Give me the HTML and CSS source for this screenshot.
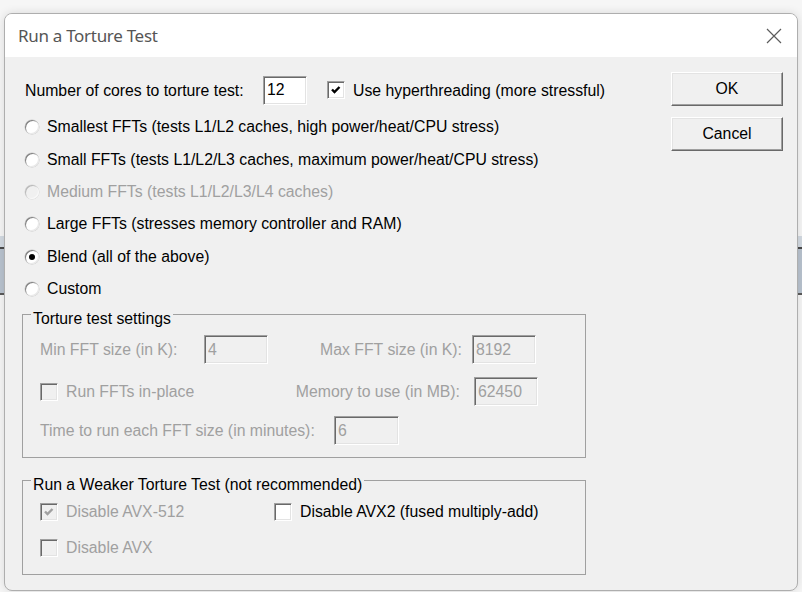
FILE: index.html
```html
<!DOCTYPE html>
<html lang="en">
<head>
  <meta charset="UTF-8">
  <title>Run a Torture Test</title>
  <link rel="stylesheet" href="styles.css">
</head>
<body>
  <div class="window">
    <div class="titlebar">
      <span class="title">Run a Torture Test</span>
      <svg class="close" width="16" height="16" viewBox="0 0 16 16">
        <path d="M1 1L15 15M15 1L1 15" stroke="#5c5c5c" stroke-width="1.2" fill="none"/>
      </svg>
    </div>

    <div class="client">
      <div class="main">
        <div class="row cores">
          <span class="cores-label">Number of cores to torture test:</span>
          <input class="field cores-field" type="text" value="12">
          <span class="check on">
            <svg width="16" height="16" viewBox="0 0 16 16"><path d="M4 7.5L6.5 10L11.5 5" stroke="#000" stroke-width="2.4" fill="none"/></svg>
          </span>
          <span class="check-text">Use hyperthreading (more stressful)</span>
        </div>

        <div class="choice"><span class="radio"></span>Smallest FFTs (tests L1/L2 caches, high power/heat/CPU stress)</div>
        <div class="choice"><span class="radio"></span>Small FFTs (tests L1/L2/L3 caches, maximum power/heat/CPU stress)</div>
        <div class="choice disabled"><span class="radio"></span>Medium FFTs (tests L1/L2/L3/L4 caches)</div>
        <div class="choice"><span class="radio"></span>Large FFTs (stresses memory controller and RAM)</div>
        <div class="choice"><span class="radio selected"></span>Blend (all of the above)</div>
        <div class="choice"><span class="radio"></span>Custom</div>

        <fieldset class="group settings">
          <legend>Torture test settings</legend>
          <div class="group-body disabled">
            <div class="row row-fft">
              <span class="min-label">Min FFT size (in K):</span>
              <input class="field size-field" type="text" value="4" disabled>
              <span class="max-label">Max FFT size (in K):</span>
              <input class="field size-field" type="text" value="8192" disabled>
            </div>
            <div class="row row-mem">
              <span class="inplace">
                <span class="check"></span>
                <span class="check-text">Run FFTs in-place</span>
              </span>
              <span class="mem-label">Memory to use (in MB):</span>
              <input class="field size-field" type="text" value="62450" disabled>
            </div>
            <div class="row row-time">
              <span class="time-label">Time to run each FFT size (in minutes):</span>
              <input class="field time-field" type="text" value="6" disabled>
            </div>
          </div>
        </fieldset>

        <fieldset class="group weaker">
          <legend>Run a Weaker Torture Test (not recommended)</legend>
          <div class="group-body">
            <div class="row row-avx">
              <span class="avx512 disabled">
                <span class="check on">
                  <svg width="16" height="16" viewBox="0 0 16 16"><path d="M4 7.5L6.5 10L11.5 5" stroke="#a0a0a0" stroke-width="2.4" fill="none"/></svg>
                </span>
                <span class="check-text">Disable AVX-512</span>
              </span>
              <span class="check white"></span>
              <span class="check-text">Disable AVX2 (fused multiply-add)</span>
            </div>
            <div class="row row-avx2 disabled">
              <span class="check"></span>
              <span class="check-text">Disable AVX</span>
            </div>
          </div>
        </fieldset>
      </div>

      <div class="side">
        <button class="btn">OK</button>
        <button class="btn">Cancel</button>
      </div>
    </div>
  </div>
</body>
</html>
```

FILE: styles.css
```css
* {
  box-sizing: border-box;
}

body {
  margin: 0;
  height: 592px;
  overflow: hidden;
  font-family: "Liberation Sans", Arial, sans-serif;
  font-size: 15.8px;
  color: #000;
  /* strip of another window peeking out behind the dialog */
  background: linear-gradient(to bottom,
    #f6f6f6 236px, #d3dae2 236px, #d3dae2 247px,
    #4a4a4a 247px, #4a4a4a 249px, #b9c3cf 249px,
    #b9c3cf 293px, #5a5a5a 293px, #5a5a5a 295px,
    #f6f6f6 295px);
}

.window {
  margin: 13px 0 0 4px;
  width: 794px;
  height: 578px;
  border: 1px solid #aeaeae;
  border-radius: 8px;
  overflow: hidden;
  background: #f0f0f0;
  box-shadow: 0 0 10px rgba(0, 0, 0, 0.12);
}

.titlebar {
  height: 43px;
  background: #fff;
  display: flex;
  align-items: center;
  justify-content: space-between;
  padding: 0 15px 0 13px;
}

.title {
  font-family: "Noto Sans", "Open Sans", sans-serif;
  font-size: 17px;
  color: #555;
  letter-spacing: -0.3px;
}

.client {
  display: flex;
}

.main {
  flex: 1;
  padding: 18px 0 0 20px;
}

.side {
  display: flex;
  flex-direction: column;
  gap: 11px;
  padding: 15px 14px 0 0;
}

.btn {
  width: 112px;
  height: 34px;
  font: inherit;
  color: #000;
  background: #f0f0f0;
  border: 1px solid;
  border-color: #fff #696969 #696969 #fff;
  box-shadow: inset -1px -1px #a0a0a0, inset 1px 1px #e3e3e3;
  padding: 0;
}

.row {
  display: flex;
  align-items: center;
}

.cores {
  height: 30px;
  margin-bottom: 6px;
}

.cores-label {
  width: 238px;
  padding-top: 1px;
}

.field {
  height: 29px;
  font: inherit;
  color: #000;
  background: #fff;
  padding: 0 3px;
  border: 1px solid;
  border-color: #a0a0a0 #fff #fff #a0a0a0;
  box-shadow: inset 1px 1px #696969, inset -1px -1px #e3e3e3;
  outline: none;
}

.field:disabled {
  background: #f0f0f0;
  color: #a0a0a0;
}

.cores-field {
  width: 44px;
  margin-right: 20px;
}

.check {
  width: 18px;
  height: 18px;
  flex: none;
  display: flex;
  align-items: center;
  justify-content: center;
  background: #f0f0f0;
  border: 1px solid;
  border-color: #a0a0a0 #fff #fff #a0a0a0;
  box-shadow: inset 1px 1px #696969, inset -1px -1px #e3e3e3;
}

.cores .check,
.check.white {
  background: #fff;
}

.check-text {
  margin-left: 8px;
}

.cores .check-text {
  padding-top: 1px;
}

.choice {
  height: 32.4px;
  display: flex;
  align-items: center;
}

.radio {
  width: 14px;
  height: 14px;
  margin-right: 8px;
  border-radius: 50%;
  background: #fff;
  box-shadow: inset 1px 1px #808080, inset -1px -1px #e8e8e8, 0 0 0 0.5px #c8c8c8;
  display: flex;
  align-items: center;
  justify-content: center;
}

.radio.selected::after {
  content: "";
  width: 6px;
  height: 6px;
  border-radius: 50%;
  background: #000;
}

.disabled {
  color: #a0a0a0;
}

.choice.disabled .radio {
  background: #f0f0f0;
  box-shadow: inset 1px 1px #b8b8b8, inset -1px -1px #f8f8f8, 0 0 0 0.5px #d8d8d8;
}

.group {
  margin: -4px 0 0 -3px;
  padding: 0;
  width: 564px;
  min-width: 0;
  border: 1px solid #a0a0a0;
}

.group legend {
  margin-left: 8px;
  padding: 9px 2px 0;
  line-height: 18px;
}

.group-body {
  padding-left: 17px;
}

.settings .group-body {
  padding-top: 7px;
  padding-bottom: 12px;
}

.row-fft,
.row-mem,
.row-time {
  height: 29px;
}

.row-mem {
  margin-top: 13px;
}

.row-time {
  margin-top: 10px;
}

.min-label {
  width: 164px;
}

.max-label {
  width: 194px;
  text-align: right;
  margin-right: 10px;
}

.size-field {
  width: 64px;
}

.inplace {
  width: 228px;
  display: flex;
  align-items: center;
}

.mem-label {
  width: 192px;
  text-align: right;
  margin-right: 14px;
}

.time-label {
  width: 294px;
}

.time-field {
  width: 65px;
}

.weaker {
  margin-top: 9px;
}

.weaker .group-body {
  padding-top: 9px;
  padding-bottom: 17px;
}

.row-avx,
.row-avx2 {
  height: 18px;
}

.row-avx2 {
  margin-top: 18px;
}

.avx512 {
  width: 234px;
  display: flex;
  align-items: center;
}
```
